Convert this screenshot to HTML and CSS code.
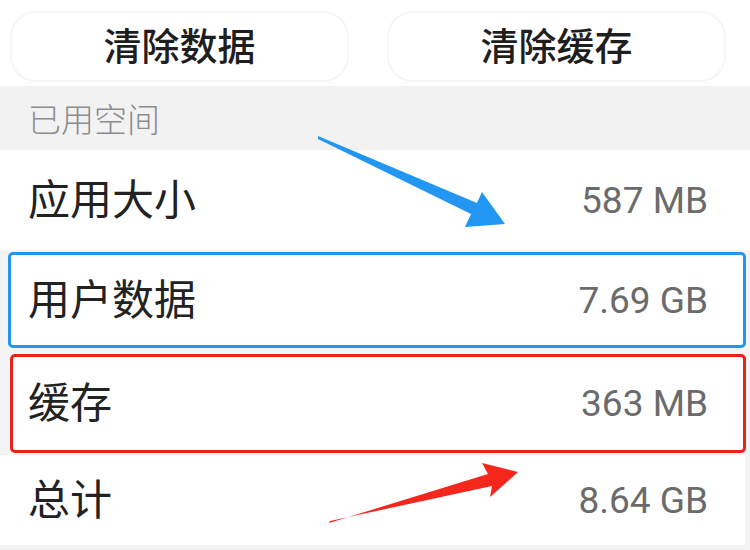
FILE: index.html
```html
<!DOCTYPE html>
<html lang="zh">
<head>
<meta charset="utf-8">
<link rel="stylesheet" href="styles.css">
</head>
<body>
<div class="page">
  <div class="buttons">
    <div class="btn">清除数据</div>
    <div class="btn">清除缓存</div>
  </div>
  <div class="section">已用空间</div>
  <div class="row">
    <span class="label">应用大小</span>
    <span class="value">587 MB</span>
  </div>
  <div class="row boxed blue">
    <span class="label">用户数据</span>
    <span class="value">7.69 GB</span>
  </div>
  <div class="row boxed red">
    <span class="label">缓存</span>
    <span class="value">363 MB</span>
  </div>
  <div class="row last">
    <span class="label">总计</span>
    <span class="value">8.64 GB</span>
  </div>
  <svg class="arrows" width="750" height="550" viewBox="0 0 750 550">
    <polygon fill="#2196f3" points="318,136 477,203 482,192 505,224 465,227 471,214 318,139"/>
    <polygon fill="#f5261b" points="329,523 488,474 482,463 518,472 490,497 492,486 330,521"/>
  </svg>
</div>
</body>
</html>
```
FILE: styles.css
```css
html, body {
  margin: 0;
  padding: 0;
  background: #ffffff;
}
.page {
  position: relative;
  width: 750px;
  height: 550px;
  overflow: hidden;
  background: #f4f4f4;
  font-family: "Noto Sans CJK SC", "Noto Sans", sans-serif;
}
.buttons {
  display: flex;
  gap: 38px;
  height: 86px;
  box-sizing: border-box;
  padding: 11px 24px 4px 10px;
  background: #ffffff;
}
.btn {
  flex: 1;
  display: flex;
  align-items: center;
  justify-content: center;
  border: 2px solid #f6f6f6;
  border-radius: 26px;
  font-size: 38px;
  font-weight: 500;
  color: #1e1e1e;
  padding-bottom: 6px;
}
.section {
  height: 64px;
  display: flex;
  align-items: center;
  padding-left: 28px;
  font-size: 33px;
  font-weight: 300;
  color: #8c8c8c;
  background: #f2f2f2;
}
.row {
  height: 100px;
  box-sizing: border-box;
  display: flex;
  align-items: center;
  justify-content: space-between;
  padding: 0 42px 0 28px;
  background: #ffffff;
}
.label {
  font-size: 42px;
  color: #222222;
  margin-bottom: 8px;
}
.value {
  font-family: Roboto, "Noto Sans", sans-serif;
  font-size: 37px;
  color: #6b6b6b;
}
.boxed {
  border: 3px solid;
  border-radius: 5px;
  height: 96px;
  padding: 0 35px 0 17px;
}
.blue {
  border-color: #2196f3;
  margin: 2px 4px 0 8px;
}
.red {
  border-color: #e8231c;
  margin: 6px 4px 0 10px;
  height: 99px;
  padding-left: 15px;
}
.last {
  margin-top: 2px;
  height: 90px;
  margin-right: 5px;
  padding-right: 37px;
}
.arrows {
  position: absolute;
  left: 0;
  top: 0;
}
```
